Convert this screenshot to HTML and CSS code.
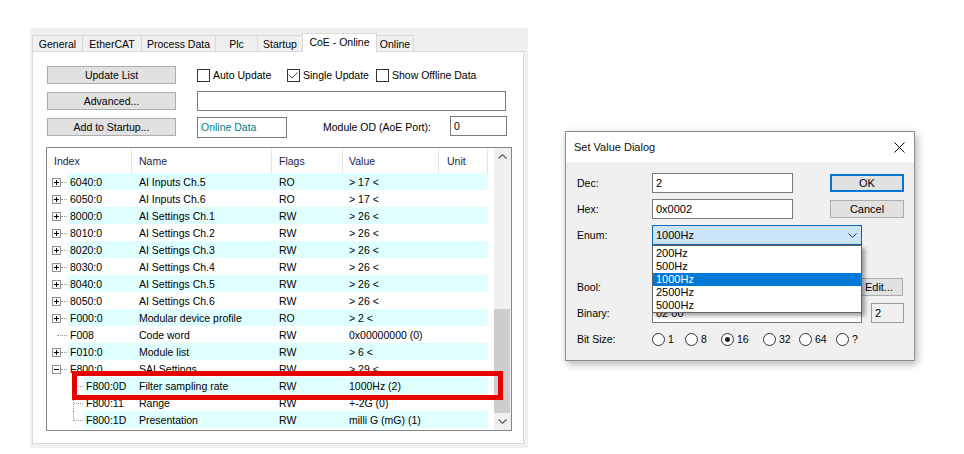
FILE: index.html
```html
<!DOCTYPE html>
<html lang="en">
  <head>
    <meta charset="UTF-8" />
    <meta name="viewport" content="width=device-width, initial-scale=1.0" />
    <title>CoE - Online</title>
    <link rel="stylesheet" href="styles.css">
  </head>
  <body>
    <div class="screen">
      <div class="window">
        <div class="tabs">
          <div class="tab t-general">General</div>
          <div class="tab t-ethercat">EtherCAT</div>
          <div class="tab t-process">Process Data</div>
          <div class="tab t-plc">Plc</div>
          <div class="tab t-startup">Startup</div>
          <div class="tab t-coe active">CoE - Online</div>
          <div class="tab t-online">Online</div>
        </div>

        <div class="page">
          <div class="controls">
            <div class="ctl-row">
              <div class="btn">Update List</div>
              <label class="check c-auto">
                <svg width="13" height="13"><rect x="0.5" y="0.5" width="12" height="12" fill="#fff" stroke="#333"/></svg>
                Auto Update
              </label>
              <label class="check c-single">
                <svg width="13" height="13"><rect x="0.5" y="0.5" width="12" height="12" fill="#fff" stroke="#333"/><path d="M2.5 6.5 L5 9 L10.5 3.5" fill="none" stroke="#444" stroke-width="1"/></svg>
                Single Update
              </label>
              <label class="check">
                <svg width="13" height="13"><rect x="0.5" y="0.5" width="12" height="12" fill="#fff" stroke="#333"/></svg>
                Show Offline Data
              </label>
            </div>
            <div class="ctl-row">
              <div class="btn">Advanced...</div>
              <div class="field f-wide"></div>
            </div>
            <div class="ctl-row">
              <div class="btn">Add to Startup...</div>
              <div class="field f-online">Online Data</div>
              <div class="od-label">Module OD (AoE Port):</div>
              <div class="field f-port">0</div>
            </div>
          </div>

          <div class="table">
            <div class="list">
              <div class="head">
                <div class="h-ix">Index</div>
                <div class="h-nm">Name</div>
                <div class="h-fl">Flags</div>
                <div class="h-vl">Value</div>
                <div class="h-un">Unit</div>
              </div>

              <div class="row">
                <div class="tree node"><svg class="exp" width="9" height="9"><rect x="0.5" y="0.5" width="8" height="8" fill="#fff" stroke="#919191"/><path d="M2 4.5H7M4.5 2V7" stroke="#000"/></svg></div>
                <div class="cells"><div class="ix">6040:0</div><div class="nm">AI Inputs Ch.5</div><div class="fl">RO</div><div class="vl">&gt; 17 &lt;</div><div class="un"></div></div>
              </div>
              <div class="row">
                <div class="tree node"><svg class="exp" width="9" height="9"><rect x="0.5" y="0.5" width="8" height="8" fill="#fff" stroke="#919191"/><path d="M2 4.5H7M4.5 2V7" stroke="#000"/></svg></div>
                <div class="cells"><div class="ix">6050:0</div><div class="nm">AI Inputs Ch.6</div><div class="fl">RO</div><div class="vl">&gt; 17 &lt;</div><div class="un"></div></div>
              </div>
              <div class="row">
                <div class="tree node"><svg class="exp" width="9" height="9"><rect x="0.5" y="0.5" width="8" height="8" fill="#fff" stroke="#919191"/><path d="M2 4.5H7M4.5 2V7" stroke="#000"/></svg></div>
                <div class="cells"><div class="ix">8000:0</div><div class="nm">AI Settings Ch.1</div><div class="fl">RW</div><div class="vl">&gt; 26 &lt;</div><div class="un"></div></div>
              </div>
              <div class="row">
                <div class="tree node"><svg class="exp" width="9" height="9"><rect x="0.5" y="0.5" width="8" height="8" fill="#fff" stroke="#919191"/><path d="M2 4.5H7M4.5 2V7" stroke="#000"/></svg></div>
                <div class="cells"><div class="ix">8010:0</div><div class="nm">AI Settings Ch.2</div><div class="fl">RW</div><div class="vl">&gt; 26 &lt;</div><div class="un"></div></div>
              </div>
              <div class="row">
                <div class="tree node"><svg class="exp" width="9" height="9"><rect x="0.5" y="0.5" width="8" height="8" fill="#fff" stroke="#919191"/><path d="M2 4.5H7M4.5 2V7" stroke="#000"/></svg></div>
                <div class="cells"><div class="ix">8020:0</div><div class="nm">AI Settings Ch.3</div><div class="fl">RW</div><div class="vl">&gt; 26 &lt;</div><div class="un"></div></div>
              </div>
              <div class="row">
                <div class="tree node"><svg class="exp" width="9" height="9"><rect x="0.5" y="0.5" width="8" height="8" fill="#fff" stroke="#919191"/><path d="M2 4.5H7M4.5 2V7" stroke="#000"/></svg></div>
                <div class="cells"><div class="ix">8030:0</div><div class="nm">AI Settings Ch.4</div><div class="fl">RW</div><div class="vl">&gt; 26 &lt;</div><div class="un"></div></div>
              </div>
              <div class="row">
                <div class="tree node"><svg class="exp" width="9" height="9"><rect x="0.5" y="0.5" width="8" height="8" fill="#fff" stroke="#919191"/><path d="M2 4.5H7M4.5 2V7" stroke="#000"/></svg></div>
                <div class="cells"><div class="ix">8040:0</div><div class="nm">AI Settings Ch.5</div><div class="fl">RW</div><div class="vl">&gt; 26 &lt;</div><div class="un"></div></div>
              </div>
              <div class="row">
                <div class="tree node"><svg class="exp" width="9" height="9"><rect x="0.5" y="0.5" width="8" height="8" fill="#fff" stroke="#919191"/><path d="M2 4.5H7M4.5 2V7" stroke="#000"/></svg></div>
                <div class="cells"><div class="ix">8050:0</div><div class="nm">AI Settings Ch.6</div><div class="fl">RW</div><div class="vl">&gt; 26 &lt;</div><div class="un"></div></div>
              </div>
              <div class="row">
                <div class="tree node"><svg class="exp" width="9" height="9"><rect x="0.5" y="0.5" width="8" height="8" fill="#fff" stroke="#919191"/><path d="M2 4.5H7M4.5 2V7" stroke="#000"/></svg></div>
                <div class="cells"><div class="ix">F000:0</div><div class="nm">Modular device profile</div><div class="fl">RO</div><div class="vl">&gt; 2 &lt;</div><div class="un"></div></div>
              </div>
              <div class="row">
                <div class="tree leaf"></div>
                <div class="cells"><div class="ix">F008</div><div class="nm">Code word</div><div class="fl">RW</div><div class="vl">0x00000000 (0)</div><div class="un"></div></div>
              </div>
              <div class="row">
                <div class="tree node"><svg class="exp" width="9" height="9"><rect x="0.5" y="0.5" width="8" height="8" fill="#fff" stroke="#919191"/><path d="M2 4.5H7M4.5 2V7" stroke="#000"/></svg></div>
                <div class="cells"><div class="ix">F010:0</div><div class="nm">Module list</div><div class="fl">RW</div><div class="vl">&gt; 6 &lt;</div><div class="un"></div></div>
              </div>
              <div class="row">
                <div class="tree node"><svg class="exp" width="9" height="9"><rect x="0.5" y="0.5" width="8" height="8" fill="#fff" stroke="#919191"/><path d="M2 4.5H7" stroke="#000"/></svg></div>
                <div class="cells"><div class="ix">F800:0</div><div class="nm">SAI Settings</div><div class="fl">RW</div><div class="vl">&gt; 29 &lt;</div><div class="un"></div></div>
              </div>
              <div class="row child">
                <div class="tree sub"></div>
                <div class="cells"><div class="ix">F800:0D</div><div class="nm">Filter sampling rate</div><div class="fl">RW</div><div class="vl">1000Hz (2)</div><div class="un"></div></div>
              </div>
              <div class="row child">
                <div class="tree sub"></div>
                <div class="cells"><div class="ix">F800:11</div><div class="nm">Range</div><div class="fl">RW</div><div class="vl">+-2G (0)</div><div class="un"></div></div>
              </div>
              <div class="row child">
                <div class="tree sub last"></div>
                <div class="cells"><div class="ix">F800:1D</div><div class="nm">Presentation</div><div class="fl">RW</div><div class="vl">milli G (mG) (1)</div><div class="un"></div></div>
              </div>
            </div>

            <div class="vscroll">
              <div class="sb-btn"><svg width="9" height="5"><path d="M0.5 4.5 L4.5 0.8 L8.5 4.5" fill="none" stroke="#606060" stroke-width="1.3"/></svg></div>
              <div class="sb-track"><div class="sb-thumb"></div></div>
              <div class="sb-btn"><svg width="9" height="5"><path d="M0.5 0.5 L4.5 4.2 L8.5 0.5" fill="none" stroke="#606060" stroke-width="1.3"/></svg></div>
            </div>
          </div>
        </div>

        <div class="mark"></div>
      </div>

      <div class="dialog">
        <div class="dlg-title">
          <span>Set Value Dialog</span>
          <svg width="11" height="11"><path d="M0.5 0.5 L10.5 10.5 M10.5 0.5 L0.5 10.5" stroke="#000" stroke-width="1"/></svg>
        </div>
        <div class="dlg-body">
          <div class="drow">
            <div class="dlabel">Dec:</div>
            <div class="dfield d-short">2</div>
            <div class="dbtn ok">OK</div>
          </div>
          <div class="drow">
            <div class="dlabel">Hex:</div>
            <div class="dfield d-short">0x0002</div>
            <div class="dbtn">Cancel</div>
          </div>
          <div class="drow">
            <div class="dlabel">Enum:</div>
            <div class="combo">
              <span>1000Hz</span>
              <svg width="9" height="5"><path d="M0.5 0.5 L4.5 4.3 L8.5 0.5" fill="none" stroke="#333" stroke-width="1"/></svg>
            </div>
          </div>
          <div class="drow r-bool">
            <div class="dlabel">Bool:</div>
            <div class="dbtn edit">Edit...</div>
          </div>
          <div class="drow">
            <div class="dlabel">Binary:</div>
            <div class="dfield d-long">02 00</div>
            <div class="dfield d-len">2</div>
          </div>
          <div class="drow r-bits">
            <div class="dlabel">Bit Size:</div>
            <div class="radio w1"><span class="dot"></span>1</div>
            <div class="radio w8"><span class="dot"></span>8</div>
            <div class="radio w16"><span class="dot on"></span>16</div>
            <div class="radio w32"><span class="dot"></span>32</div>
            <div class="radio w64"><span class="dot"></span>64</div>
            <div class="radio"><span class="dot"></span>?</div>
          </div>

          <div class="droplist">
            <div class="opt">200Hz</div>
            <div class="opt">500Hz</div>
            <div class="opt sel">1000Hz</div>
            <div class="opt">2500Hz</div>
            <div class="opt">5000Hz</div>
          </div>
        </div>
      </div>
    </div>
  </body>
</html>
```

FILE: styles.css
```css
*,
*::before,
*::after {
  box-sizing: border-box;
  padding: 0;
  margin: 0;
}
body {
  background: #fff;
  font-family: "Liberation Sans", Arial, sans-serif;
  color: #000;
}
.screen {
  display: flex;
  align-items: flex-start;
  padding: 28px 0 0 30px;
}

/* left window */
.window {
  position: relative;
  width: 498px;
  height: 420px;
  background: #f0f0f0;
  padding: 5px 4px 4px 2px;
  display: flex;
  flex-direction: column;
  font-size: 10.5px;
}
.tabs {
  display: flex;
  align-items: flex-end;
  height: 18px;
}
.tab {
  height: 16px;
  margin-left: -1px;
  border: 1px solid #d9d9d9;
  border-bottom: none;
  background: #f0f0f0;
  display: flex;
  align-items: center;
  justify-content: center;
  white-space: nowrap;
}
.tab:first-child {
  margin-left: 0;
}
.tab.active {
  position: relative;
  z-index: 1;
  height: 19px;
  margin-bottom: -1px;
  background: #fff;
  padding-bottom: 2px;
}
.t-general { width: 51px; }
.t-ethercat { width: 60px; }
.t-process { width: 75px; }
.t-plc { width: 43px; }
.t-startup { width: 46px; }
.t-coe { width: 75px; }
.t-online { width: 38px; }

.page {
  flex: 1;
  background: #fff;
  border: 1px solid #d9d9d9;
  padding: 13px 0 0 14px;
}
.controls {
  display: flex;
  flex-direction: column;
  gap: 6px;
}
.ctl-row {
  display: flex;
  align-items: center;
  height: 20px;
}
.btn {
  width: 129px;
  height: 18px;
  margin-right: 21px;
  background: #e1e1e1;
  border: 1px solid #adadad;
  display: flex;
  align-items: center;
  justify-content: center;
}
.check {
  display: flex;
  align-items: center;
  gap: 3px;
  white-space: nowrap;
}
.c-auto { width: 90px; }
.c-single { width: 89px; }
.field {
  height: 20px;
  border: 1px solid #7a7a7a;
  background: #fff;
  padding-left: 3px;
  display: flex;
  align-items: center;
}
.f-wide { width: 309px; }
.f-online {
  width: 90px;
  height: 21px;
  color: #008080;
}
.od-label {
  width: 127px;
  margin-left: 36px;
}
.f-port {
  width: 57px;
  margin-top: -2px;
}

/* object list */
.table {
  margin: 10px 0 0 -1px;
  width: 466px;
  height: 284px;
  border: 1px solid #828790;
  display: flex;
}
.list {
  width: 447px;
  display: flex;
  flex-direction: column;
}
.head {
  display: flex;
  height: 25px;
  color: #1e1e46;
}
.head div {
  border-right: 1px solid #e5e5e5;
  display: flex;
  align-items: center;
  padding-left: 7px;
}
.h-ix { width: 85px; }
.h-nm { width: 140px; }
.h-fl { width: 71px; }
.h-vl { width: 96px; padding-left: 6px !important; }
.h-un { width: 49px; padding-left: 8px !important; }

.row {
  display: flex;
  height: 17px;
  line-height: 18px;
  white-space: nowrap;
}
.tree {
  position: relative;
  flex: none;
  width: 21px;
}
.child .tree {
  width: 37px;
}
.exp {
  position: absolute;
  left: 5px;
  top: 5px;
}
.node::after,
.leaf::after,
.sub::after {
  content: "";
  position: absolute;
  top: 9px;
  border-top: 1px dotted #9a9a9a;
}
.node::after { left: 14px; width: 6px; }
.leaf::after { left: 10px; width: 10px; }
.sub::after { left: 27px; width: 9px; }
.sub::before {
  content: "";
  position: absolute;
  left: 26px;
  top: 0;
  height: 17px;
  border-left: 1px dotted #9a9a9a;
}
.sub.last::before {
  height: 10px;
}
.cells {
  display: flex;
  width: 420px;
}
.child .cells {
  width: 404px;
}
.row:nth-child(even) .cells {
  background: #e0ffff;
}
.ix { flex: 1; padding-left: 2px; }
.nm { width: 140px; padding-left: 7px; }
.fl { width: 71px; padding-left: 7px; }
.vl { width: 96px; padding-left: 6px; }
.un { width: 49px; }

.vscroll {
  width: 17px;
  background: #f0f0f0;
  display: flex;
  flex-direction: column;
}
.sb-btn {
  height: 17px;
  display: flex;
  align-items: center;
  justify-content: center;
}
.sb-track {
  flex: 1;
  display: flex;
  flex-direction: column;
  justify-content: flex-end;
}
.sb-thumb {
  height: 104px;
  margin-right: 1px;
  background: #cdcdcd;
}

/* red highlight over the selected entry */
.mark {
  position: absolute;
  left: 42px;
  top: 343px;
  width: 431px;
  height: 29px;
  border: 5px solid #e60000;
}

/* dialog */
.dialog {
  margin: 103px 0 0 37px;
  width: 350px;
  height: 230px;
  border: 1px solid #8c8c8c;
  background: #f0f0f0;
  box-shadow: 2px 3px 8px rgba(0, 0, 0, 0.3);
  display: flex;
  flex-direction: column;
  font-size: 10.5px;
}
.dlg-title {
  height: 30px;
  background: #fff;
  padding: 0 9px 0 8px;
  display: flex;
  align-items: center;
  justify-content: space-between;
  font-size: 11px;
  color: #111;
}
.dlg-body {
  position: relative;
  flex: 1;
  padding: 11px 0 0 11px;
  display: flex;
  flex-direction: column;
  gap: 6px;
}
.drow {
  display: flex;
  align-items: center;
  height: 20px;
}
.r-bool {
  margin-top: 26px;
}
.r-bits {
  height: 18px;
  margin-top: 1px;
}
.dlabel {
  width: 75px;
}
.dfield {
  height: 20px;
  border: 1px solid #7a7a7a;
  background: #fff;
  padding-left: 3px;
  display: flex;
  align-items: center;
  font-size: 11px;
}
.d-short { width: 141px; }
.d-long { width: 210px; }
.d-len {
  width: 33px;
  margin-left: 9px;
  background: #f0f0f0;
  border-color: #9a9a9a;
}
.dbtn {
  width: 74px;
  height: 18px;
  margin-left: 37px;
  background: #e1e1e1;
  border: 1px solid #adadad;
  display: flex;
  align-items: center;
  justify-content: center;
  font-size: 11px;
}
.dbtn.ok {
  border: 2px solid #0078d7;
}
.dbtn.edit {
  width: 48px;
  margin-left: 203px;
}
.combo {
  width: 210px;
  height: 20px;
  border: 1px solid #0a64b4;
  background: #cce4f7;
  padding: 0 4px 0 3px;
  display: flex;
  align-items: center;
  justify-content: space-between;
  font-size: 11px;
}
.radio {
  display: flex;
  align-items: center;
  gap: 3px;
}
.w1 { width: 33px; }
.w8 { width: 36px; }
.w16 { width: 42px; }
.w32 { width: 36px; }
.w64 { width: 37px; }
.dot {
  width: 13px;
  height: 13px;
  border: 1px solid #333;
  border-radius: 50%;
  background: #fff;
  display: flex;
  align-items: center;
  justify-content: center;
}
.dot.on::after {
  content: "";
  width: 5px;
  height: 5px;
  border-radius: 50%;
  background: #222;
}
.droplist {
  position: absolute;
  left: 86px;
  top: 83px;
  width: 210px;
  height: 68px;
  border: 1px solid #646464;
  background: #fff;
  padding-top: 1px;
  box-shadow: 3px 3px 4px rgba(0, 0, 0, 0.35);
  font-size: 11px;
}
.opt {
  height: 13px;
  line-height: 13px;
  padding-left: 3px;
}
.opt.sel {
  background: #0078d7;
  color: #fff;
}
```
